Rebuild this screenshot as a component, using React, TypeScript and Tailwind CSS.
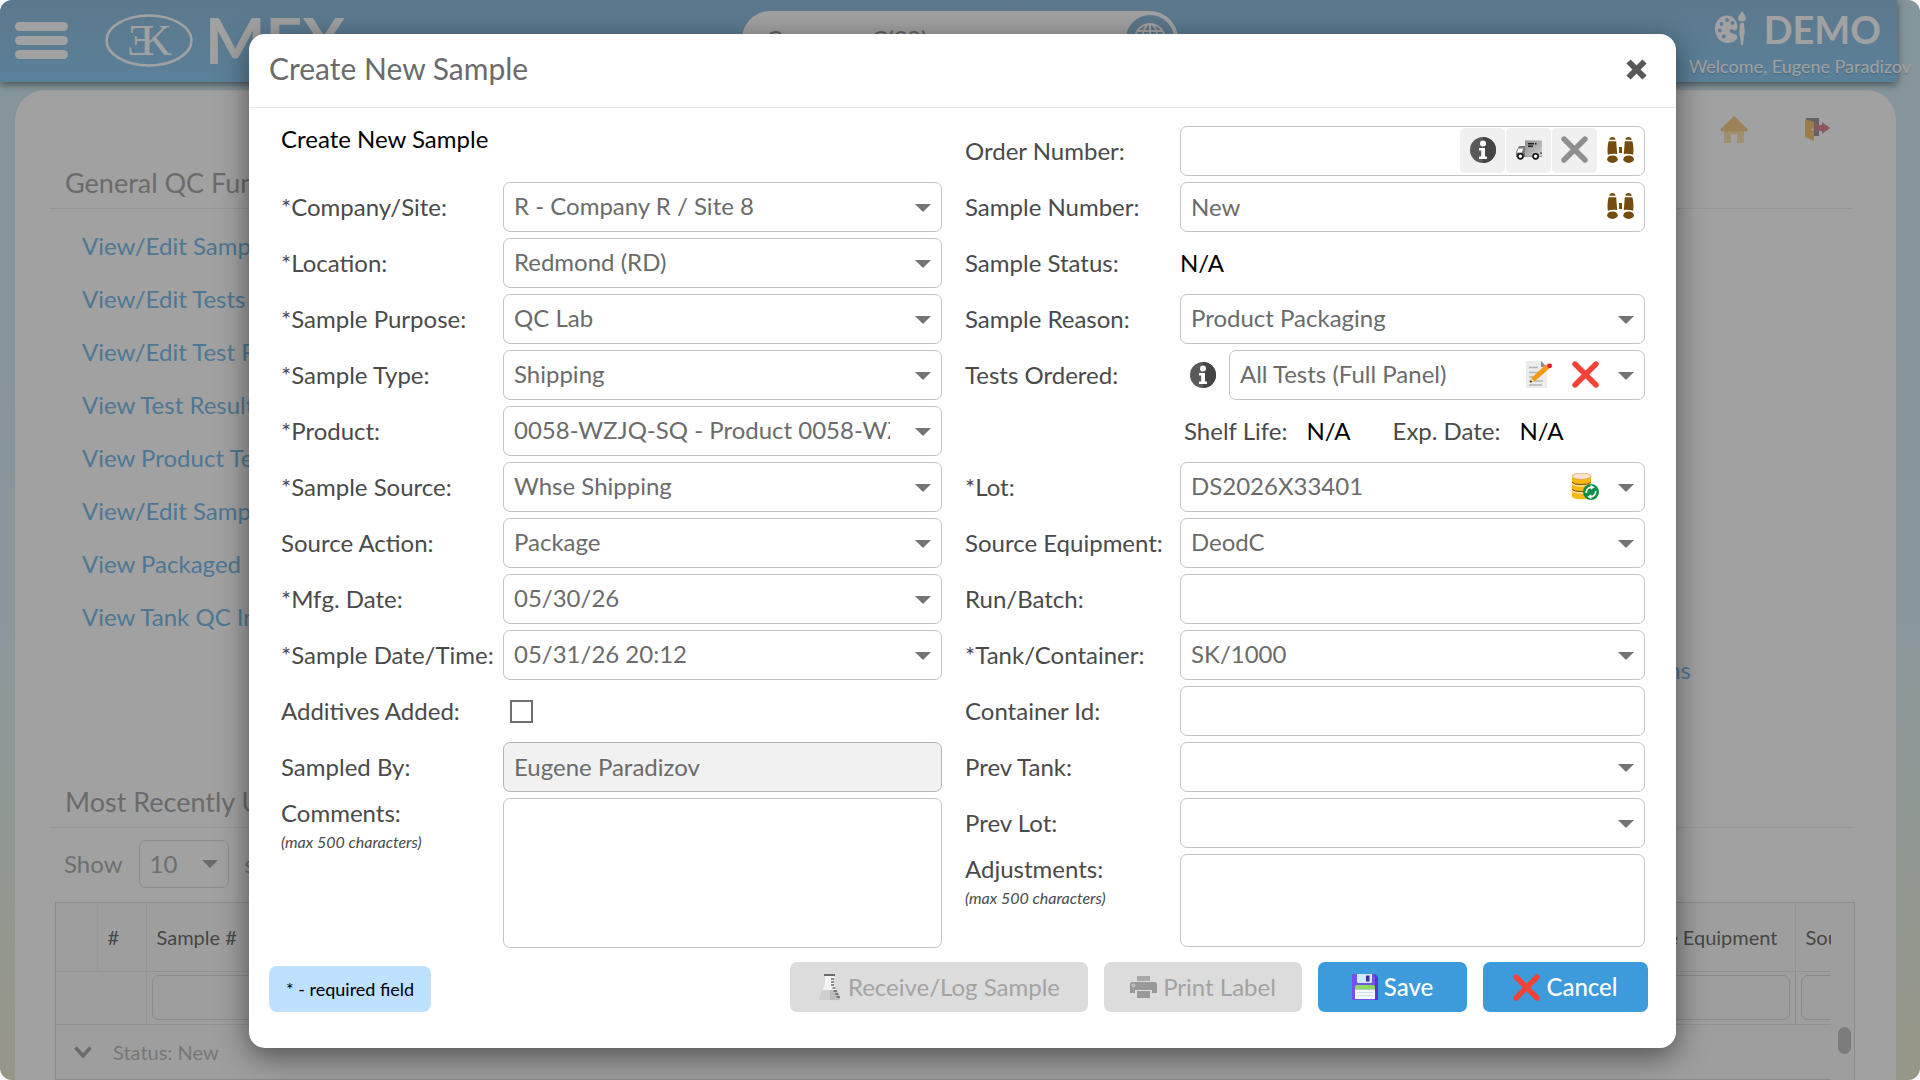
import { useId, type ReactNode } from 'react';
import clsx from 'clsx';

const QC_LINKS = [
  'View/Edit Samples',
  'View/Edit Tests',
  'View/Edit Test Results',
  'View Test Results',
  'View Product Tests',
  'View/Edit Sample Plans',
  'View Packaged Inventory',
  'View Tank QC Info',
];

const FIELD = 'w-full rounded-[7px] border text-2xl text-[#6b6b6b] outline-none';

/* ---------- icons ---------- */

function InfoIcon() {
  return (
    <svg width="26" height="26" viewBox="0 0 26 26">
      <circle cx="13" cy="13" r="13" fill="#5a5a5a" />
      <path d="M13 0a13 13 0 0 1 0 26z" fill="#454545" />
      <circle cx="13" cy="6.6" r="3" fill="#fff" />
      <path d="M9 11h6v8.6h2V22H9v-2.4h2.2v-6.2H9z" fill="#fff" />
    </svg>
  );
}

function TruckIcon() {
  return (
    <svg width="26" height="26" viewBox="0 0 26 26">
      <defs>
        <linearGradient id="truck-box" x1="0" y1="0" x2="1" y2="1">
          <stop offset="0" stopColor="#8d8d8d" />
          <stop offset="1" stopColor="#cfcfcf" />
        </linearGradient>
      </defs>
      <path d="M9 3.5h17V19H9z" fill="url(#truck-box)" />
      <path d="M12 6h6v1.5h-6zM19 6h1.5v1.5H19zM12 8.5h5V10h-5z" fill="#222" />
      <path d="M3 9h6v11H0v-5z" fill="#777" />
      <path d="M2.6 11.5h4.6l-1.4 4H.8z" fill="#fff" />
      <path d="M9 19h17v1H9z" fill="#999" />
      <circle cx="4.4" cy="19.3" r="2.6" fill="#fff" stroke="#111" strokeWidth="1.6" />
      <circle cx="19.6" cy="19.3" r="2.6" fill="#fff" stroke="#111" strokeWidth="1.6" />
      <path d="M24 15.5h2V17h-2z" fill="#555" />
    </svg>
  );
}

function CrossIcon({ color }: { color: string }) {
  return (
    <svg width="27" height="27" viewBox="0 0 27 27">
      <path d="M3 3l21 21M24 3L3 24" stroke={color} strokeWidth="5.4" strokeLinecap="round" />
    </svg>
  );
}

function BinocularsIcon() {
  return (
    <svg width="27" height="26" viewBox="0 0 27 26" fill="#754c10">
      <path d="M2.2 2.8C2.6.9 3.6 0 5.4 0s2.8.9 3.2 2.8zM18.4 2.8C18.8.9 19.8 0 21.6 0s2.8.9 3.2 2.8z" />
      <path d="M1.6 4.2h7.6l1 13c-3-.6-6-.4-9.4.6C.2 13 .6 8 1.6 4.2zM25.4 4.2h-7.6l-1 13c3-.6 6-.4 9.4.6.6-4.8.2-9.8-.8-13.6z" />
      <path d="M12 10h3v6h-3z" />
      <ellipse cx="5.4" cy="22.2" rx="5.3" ry="3.7" />
      <ellipse cx="21.6" cy="22.2" rx="5.3" ry="3.7" />
    </svg>
  );
}

function EditNoteIcon() {
  return (
    <svg width="26" height="27" viewBox="0 0 26 27">
      <path d="M0 0h15l6 6v21H0z" fill="#ececec" />
      <path d="M15 0l6 6h-6z" fill="#8e8e8e" />
      <path d="M3 6.5h9M3 11.5h10M3 16h5M3 20h14M3 24h13" stroke="#b4b4b4" strokeWidth="1.4" />
      <path d="M4 21.5l1.4-4.6L20 3.6l3.6 3.6L8.6 20.4z" fill="#f59a12" />
      <path d="M20 3.6l1.6-1.4 3.6 3.6-1.6 1.4z" fill="#c9c9c9" />
      <circle cx="23.6" cy="4.8" r="2.4" fill="#f5122b" />
      <path d="M4 21.5l1.4-4.6 3.2 3.5z" fill="#f4d6a8" />
      <path d="M4 21.5l.6-2.2 1.7 1.6z" fill="#111" />
    </svg>
  );
}

function DatabaseIcon() {
  return (
    <svg width="27" height="27" viewBox="0 0 27 27">
      <path d="M0 3v20.5C2 27.2 17 27.2 19 23.5V3z" fill="#f9b90f" />
      <path d="M0 9c2 3.4 17 3.4 19 0M0 16c2 3.4 17 3.4 19 0" stroke="#8a5a10" strokeWidth="1.2" fill="none" />
      <path d="M0 10.4c2 3.4 17 3.4 19 0M0 17.4c2 3.4 17 3.4 19 0" stroke="#fde3b0" strokeWidth="1.4" fill="none" />
      <ellipse cx="9.5" cy="3.2" rx="9.5" ry="3.2" fill="#fbe3cb" stroke="#c98f4b" strokeWidth=".6" />
      <circle cx="19" cy="19" r="8" fill="#0b8f47" />
      <path d="M14.4 20a4.8 4.8 0 0 1 5-5.600M23.6 18a4.8 4.8 0 0 1-5 5.600" stroke="#fff" strokeWidth="1.8" fill="none" />
      <path d="M18.6 11.8l4 2.4-3.8 2.6zM19.4 26.2l-4-2.4 3.8-2.600z" fill="#fff" />
    </svg>
  );
}

function FlaskIcon() {
  return (
    <svg width="24" height="27" viewBox="0 0 24 27">
      <path d="M7 1h9v9l5.6 13.4c.4 1.8-.4 2.8-2 2.8H3c-1.8 0-2.6-1-2-2.8L7 11z" fill="#f5f5f5" />
      <path d="M4 16h8v10.2H3c-1.8 0-2.6-1-2-2.8z" fill="#cfcfcf" />
      <path d="M12 16h7l3 7.4c.4 1.8-.4 2.8-2 2.8h-8z" fill="#bdbdbd" />
      <path d="M6 0h11v2H6z" fill="#6a6a6a" />
      <path d="M13 5h3M13 8h3M13 11h3M14.5 14h3M15.5 17H19M17 20h3.5M18.5 23H22" stroke="#666" strokeWidth="1.4" />
    </svg>
  );
}

function PrinterIcon() {
  return (
    <svg width="27" height="22" viewBox="0 0 27 22">
      <path d="M7 0h13v5H7z" fill="#a9a9a9" />
      <path d="M0 8.5C0 6.7.9 6 2.5 6h22c1.6 0 2.5.7 2.5 2.5V17h-5v-3H5v3H0z" fill="#999" />
      <path d="M7 15h13v7H7z" fill="#999" />
      <circle cx="3.5" cy="9.5" r="1.3" fill="#999" stroke="#ddd" strokeWidth=".9" />
    </svg>
  );
}

function FloppyIcon() {
  return (
    <svg width="26" height="26" viewBox="0 0 26 26">
      <path d="M1 0h21l4 4v21a1 1 0 0 1-1 1H1a1 1 0 0 1-1-1V1a1 1 0 0 1 1-1z" fill="#7553e8" />
      <path d="M22 0h1l3 3v23h-3V4z" fill="#5b34c9" />
      <path d="M5 0h15v7.5A1.5 1.5 0 0 1 18.5 9h-12A1.5 1.5 0 0 1 5 7.5z" fill="#cdebfb" />
      <path d="M14 1.5h3.500v6H14z" fill="#4327a8" />
      <path d="M3 13a2 2 0 0 1 2-2h16a2 2 0 0 1 2 2v2.5H3z" fill="#8fdc5a" />
      <path d="M3 15.5h20V25H3z" fill="#f3faff" />
      <path d="M5 18.5h16M5 21.8h16" stroke="#c9dbe8" strokeWidth=".9" />
    </svg>
  );
}

function LogoIcon() {
  return (
    <svg width="88" height="53" viewBox="0 0 88 53">
      <ellipse cx="44" cy="26.5" rx="42.5" ry="25" fill="none" stroke="#fff" strokeWidth="2.6" />
      <g fill="#fff" fontFamily="'Liberation Serif', serif" fontSize="44">
        <text x="22" y="41">Ǝ</text>
        <text x="35" y="41">K</text>
      </g>
    </svg>
  );
}

function GlobeIcon() {
  return (
    <svg width="32" height="32" viewBox="0 0 32 32" fill="none" stroke="#fff" strokeWidth="2">
      <circle cx="16" cy="16" r="15" />
      <ellipse cx="16" cy="16" rx="7.5" ry="15" />
      <path d="M16 1v30M1 16h30M4 8h24M4 24h24" />
    </svg>
  );
}

function PaletteIcon() {
  return (
    <svg width="31" height="34" viewBox="0 0 31 34">
      <path
        d="M12 4.500C5 4.500 0 10.500 0 18s5.200 14 12.500 14c4 0 8-1.600 9.500-4.500 1.200-2.600-.6-4.200-2.800-4.600-2.200-.5-4.600-1.600-4.400-3.400.2-1.600 2.200-1.400 4.200-.6 2 .8 3.800-.4 3.400-3.900C21.700 9 17.500 4.500 12 4.500z"
        fill="#fff"
      />
      <g fill="#93c5e8">
        <circle cx="12" cy="9" r="1.9" />
        <circle cx="6.5" cy="13" r="1.9" />
        <circle cx="17.5" cy="12" r="1.9" />
        <circle cx="4.8" cy="19.5" r="1.9" />
        <circle cx="8.8" cy="25.5" r="1.9" />
      </g>
      <path d="M27 0c2.4 3 4 5.5 4 7.5 0 1.8-1.5 3-4 3s-4-1.200-4-3C23 5.500 24.600 3 27 0zM25 12h4l.8 9L27.800 34h-1.600L24.200 21z" fill="#fff" />
    </svg>
  );
}

function HomeIcon() {
  return (
    <svg width="28" height="27" viewBox="0 0 28 27">
      <path d="M4 13h20v14h-7v-9h-6v9H4z" fill="#f9dc93" />
      <path d="M14 0l14 13.500-2 2H2l-2-2z" fill="#f3bf66" />
    </svg>
  );
}

function ExitIcon() {
  return (
    <svg width="25" height="25" viewBox="0 0 25 25">
      <path d="M1 1h13v18H1z" fill="#7d7d85" />
      <path d="M0 2l9 3v19l-9-4z" fill="#f2b04a" />
      <circle cx="7.4" cy="12.5" r="1.1" fill="#fff" />
      <path d="M11 8h6V5l8 6-8 6v-3h-6z" fill="#dc5c78" />
    </svg>
  );
}

function Caret({ className }: { className?: string }) {
  return (
    <svg width="16" height="8" viewBox="0 0 16 8" className={clsx('pointer-events-none absolute', className)}>
      <path d="M0 0h16L8 8z" fill="currentColor" />
    </svg>
  );
}

/* ---------- form pieces ---------- */

function Row({ label, htmlFor, side, children }: { label: string; htmlFor?: string; side: 'left' | 'right'; children: ReactNode }) {
  return (
    <div className="flex h-[50px] items-center">
      <label htmlFor={htmlFor} className={clsx('shrink-0 text-2xl text-[#4a4a4a]', side === 'left' ? 'w-[222px]' : 'w-[215px]')}>
        {label}
      </label>
      <div className="flex min-w-0 flex-1 items-center">{children}</div>
    </div>
  );
}

function SelectRow({ label, value, side = 'left', before, extra }: {
  label: string;
  value: string;
  side?: 'left' | 'right';
  before?: ReactNode;
  extra?: ReactNode;
}) {
  const id = useId();
  return (
    <Row label={label} htmlFor={id} side={side}>
      {before}
      <div className="relative min-w-0 flex-1">
        <select id={id} defaultValue={value} className={clsx(FIELD, 'h-[50px] appearance-none border-[#c4c4c4] bg-white pr-[51px] pb-[2px] pl-[10px]')}>
          <option value={value}>{value}</option>
        </select>
        {extra && <div className="absolute inset-y-0 right-[46px] flex items-center gap-5 pb-[2px]">{extra}</div>}
        <Caret className="top-[22px] right-[11px] text-[#737373]" />
      </div>
    </Row>
  );
}

function InputRow({ label, value = '', side = 'left', disabled, extra }: {
  label: string;
  value?: string;
  side?: 'left' | 'right';
  disabled?: boolean;
  extra?: ReactNode;
}) {
  const id = useId();
  return (
    <Row label={label} htmlFor={id} side={side}>
      <div className="relative min-w-0 flex-1">
        <input
          id={id}
          type="text"
          defaultValue={value}
          disabled={disabled}
          className={clsx(FIELD, 'h-[50px] px-[10px] pb-[2px]', disabled ? 'border-[#b5b5b5] bg-[#f1f1f1]' : 'border-[#c4c4c4] bg-white')}
        />
        {extra && <div className="absolute top-0 right-0 flex gap-px pt-[2px] pr-[2px]">{extra}</div>}
      </div>
    </Row>
  );
}

function NoteRow({ label, side, className }: { label: string; side: 'left' | 'right'; className: string }) {
  const id = useId();
  return (
    <div className="flex items-start">
      <label htmlFor={id} className={clsx('shrink-0 text-2xl leading-[30px] text-[#4a4a4a]', side === 'left' ? 'w-[222px]' : 'w-[215px]')}>
        {label}
        <span className="block text-base leading-[28px] italic">(max 500 characters)</span>
      </label>
      <textarea id={id} className={clsx(FIELD, 'min-w-0 flex-1 resize-none border-[#c4c4c4] bg-white px-[10px] py-1', className)} />
    </div>
  );
}

function ToolButton({ title, plain, children }: { title: string; plain?: boolean; children: ReactNode }) {
  return (
    <button type="button" title={title} className={clsx('flex size-[45px] items-center justify-center rounded-[5px] pb-[2px]', !plain && 'bg-[#f0f0f0]')}>
      {children}
    </button>
  );
}

/* ---------- page behind the dialog ---------- */

function PageHeader() {
  return (
    <header className="relative mr-[23px] flex h-[82px] items-start bg-linear-to-b from-[#93bedd] to-[#90cdf5] shadow-[0_2px_8px_rgba(0,0,0,0.5)]">
      <button type="button" aria-label="Menu" className="mt-[22px] ml-[15px] flex flex-col gap-[5px]">
        <span className="h-[9px] w-[53px] rounded-full bg-white" />
        <span className="h-[9px] w-[53px] rounded-full bg-white" />
        <span className="h-[9px] w-[53px] rounded-full bg-white" />
      </button>
      <div className="mt-[14px] ml-[37px] flex items-start text-white">
        <LogoIcon />
        <span className="ml-[12px] text-[64px] leading-[52px] font-bold">MEX</span>
      </div>
      <div className="absolute top-[11px] left-[742px] flex h-[56px] w-[436px] items-center justify-between rounded-full bg-white pr-1 pl-6 text-2xl text-[#999]">
        Company C(S8)
        <span className="flex size-12 items-center justify-center rounded-full bg-[#93bedd]">
          <GlobeIcon />
        </span>
      </div>
      <div className="absolute top-[11px] right-[-14px] flex flex-col items-end text-white">
        <div className="mr-[30px] flex items-start gap-[18px]">
          <PaletteIcon />
          <span className="text-[38px] leading-[37px] font-bold">DEMO</span>
        </div>
        <span className="mt-[5px] text-lg leading-[26px] text-shadow-sm">Welcome, Eugene Paradizov</span>
      </div>
    </header>
  );
}

function SampleTable() {
  return (
    <div className="relative mr-[41px] ml-[40px] h-[178px] overflow-hidden border border-b-0 border-[#dedede] bg-[#fbfbfb]">
      <table className="w-[calc(100%-23px)] table-fixed border-collapse text-left text-xl text-[#6f6f6f]">
        <colgroup>
          <col className="w-[41px]" />
          <col className="w-[49px]" />
          <col className="w-[200px]" />
          <col />
          <col className="w-[195px]" />
          <col className="w-[36px]" />
        </colgroup>
        <thead>
          <tr className="h-[68px] border-b border-[#e8e8e8]">
            <th className="border-r border-[#efefef]" />
            <th className="border-r border-[#ebebeb] pl-[10px] font-normal">#</th>
            <th className="border-r border-[#ebebeb] pl-[10px] font-normal">Sample #</th>
            <th />
            <th className="border-r border-[#ebebeb] pr-[17px] text-right font-normal">Source Equipment</th>
            <th className="overflow-hidden pl-[10px] font-normal whitespace-nowrap">Source</th>
          </tr>
        </thead>
        <tbody>
          <tr className="h-[53px] border-b border-[#e4e4e4]">
            <td colSpan={2} className="border-r border-[#ebebeb]" />
            <td className="pl-[5px]">
              <input aria-label="Filter sample number" className="h-[45px] w-full rounded-[7px] border border-[#ddd]" />
            </td>
            <td />
            <td className="border-r border-[#dedede] pr-[5px]">
              <input aria-label="Filter equipment" className="h-[45px] w-full rounded-[7px] border border-[#dadada]" />
            </td>
            <td className="overflow-hidden pl-[5px]">
              <input aria-label="Filter source" className="h-[45px] w-[120px] rounded-[7px] border border-[#dadada]" />
            </td>
          </tr>
          <tr className="h-[55px] border-b border-[#ddd]">
            <td colSpan={6} className="pl-[18px] text-[#bdbdbd]">
              <div className="flex items-center gap-[21px]">
                <svg width="18" height="12" viewBox="0 0 18 12" fill="none" stroke="#aaa" strokeWidth="3.5">
                  <path d="M1.5 1.5L9 10l7.5-8.5" />
                </svg>
                Status: New
              </div>
            </td>
          </tr>
        </tbody>
      </table>
      <div className="absolute top-[124px] right-[3px] h-[27px] w-[13px] rounded-full bg-[#c4c4c4]" />
    </div>
  );
}

function QcPage() {
  return (
    <div className="flex h-full flex-col bg-linear-to-b from-[#d3ecf6] from-20% via-[#dcf0f4] via-60% to-[#eeeed6]">
      <PageHeader />
      <main className="mt-2 mr-[24px] ml-[15px] flex-1 overflow-hidden rounded-t-[30px] bg-white">
        <div className="mr-[66px] flex h-[64px] items-center justify-end gap-[57px] pt-[15px] opacity-75">
          <a href="#home" title="Home"><HomeIcon /></a>
          <a href="#exit" title="Exit"><ExitIcon /></a>
        </div>
        <section className="h-[620px] pr-[43px] pl-[35px]">
          <h2 className="h-[55px] border-b border-[#eee] pt-[11px] pl-[15px] text-[27px] leading-[36px] text-[#aaa]">General QC Functions</h2>
          <div className="flex h-[487px] justify-between pt-[11px] pr-[162px] pl-[32px] text-2xl">
            <ul>
              {QC_LINKS.map((link, i) => (
                <li key={i} className="h-[53px] leading-[52px] text-[#7cbde9]">
                  <a href="#qc">{link}</a>
                </li>
              ))}
            </ul>
            <a href="#qc" className="self-end leading-[52px] text-[#7cbde9]">Specifications</a>
          </div>
        </section>
        <section>
          <h2 className="mr-[43px] ml-[35px] h-[54px] border-b border-[#eee] pt-[10px] pl-[15px] text-[27px] leading-[36px] text-[#aaa]">
            Most Recently Updated
          </h2>
          <div className="flex h-[74px] items-center gap-4 pb-[3px] pl-[49px] text-2xl text-[#b0b0b0]">
            <label htmlFor="page-size">Show</label>
            <div className="relative w-[90px]">
              <select id="page-size" className="h-[48px] w-full appearance-none rounded-[7px] border border-[#ddd] pl-[10px]">
                <option>10</option>
              </select>
              <Caret className="top-[20px] right-[11px] text-[#aaa]" />
            </div>
            samples
          </div>
          <SampleTable />
        </section>
      </main>
    </div>
  );
}

/* ---------- dialog ---------- */

function CreateSampleDialog() {
  const additivesId = useId();
  return (
    <div role="dialog" aria-label="Create New Sample" className="w-full rounded-2xl bg-white shadow-[0_8px_30px_rgba(0,0,0,0.5)]">
      <div className="flex h-[74px] items-center justify-between border-b border-[#e6e6e6] pr-[29px] pb-[3px] pl-5">
        <h1 className="pb-[3px] text-3xl text-[#6b6b6b]">Create New Sample</h1>
        <button type="button" aria-label="Close">
          <svg width="21" height="21" viewBox="0 0 21 21">
            <path d="M2.5 2.5l16 16M18.5 2.5l-16 16" stroke="#595959" strokeWidth="6" />
          </svg>
        </button>
      </div>

      <form className="grid grid-cols-[661fr_680fr] gap-x-[23px] pt-[18px] pr-[31px] pl-8">
        <div className="flex flex-col gap-[6px]">
          <h2 className="h-[50px] text-2xl leading-[26px] text-black">Create New Sample</h2>
          <SelectRow label="*Company/Site:" value="R - Company R / Site 8" />
          <SelectRow label="*Location:" value="Redmond (RD)" />
          <SelectRow label="*Sample Purpose:" value="QC Lab" />
          <SelectRow label="*Sample Type:" value="Shipping" />
          <SelectRow label="*Product:" value="0058-WZJQ-SQ - Product 0058-WZJQ-SQ" />
          <SelectRow label="*Sample Source:" value="Whse Shipping" />
          <SelectRow label="Source Action:" value="Package" />
          <SelectRow label="*Mfg. Date:" value="05/30/26" />
          <SelectRow label="*Sample Date/Time:" value="05/31/26 20:12" />
          <Row label="Additives Added:" htmlFor={additivesId} side="left">
            <input id={additivesId} type="checkbox" className="ml-[7px] size-[23px] appearance-none border-2 border-[#707070] bg-white" />
          </Row>
          <InputRow label="Sampled By:" value="Eugene Paradizov" disabled />
          <NoteRow label="Comments:" side="left" className="h-[150px]" />
        </div>

        <div className="flex flex-col gap-[6px]">
          <InputRow
            label="Order Number:"
            side="right"
            extra={
              <>
                <ToolButton title="Order info"><InfoIcon /></ToolButton>
                <ToolButton title="Shipment"><TruckIcon /></ToolButton>
                <ToolButton title="Clear order"><CrossIcon color="#8f8f8f" /></ToolButton>
                <ToolButton title="Find order" plain><BinocularsIcon /></ToolButton>
              </>
            }
          />
          <InputRow label="Sample Number:" value="New" side="right" extra={<ToolButton title="Find sample" plain><BinocularsIcon /></ToolButton>} />
          <Row label="Sample Status:" side="right">
            <span className="text-2xl text-black">N/A</span>
          </Row>
          <SelectRow label="Sample Reason:" value="Product Packaging" side="right" />
          <SelectRow
            label="Tests Ordered:"
            value="All Tests (Full Panel)"
            side="right"
            before={<button type="button" title="Test info" className="mr-[13px] ml-[10px]"><InfoIcon /></button>}
            extra={
              <>
                <button type="button" title="Edit tests"><EditNoteIcon /></button>
                <button type="button" title="Clear tests"><CrossIcon color="#f44336" /></button>
              </>
            }
          />
          <div className="flex h-[50px] items-center pl-[219px] text-2xl text-[#4a4a4a]">
            Shelf Life:
            <span className="ml-[19px] text-black">N/A</span>
            <span className="ml-[42px]">Exp. Date:</span>
            <span className="ml-[19px] text-black">N/A</span>
          </div>
          <SelectRow label="*Lot:" value="DS2026X33401" side="right" extra={<button type="button" title="Refresh lots"><DatabaseIcon /></button>} />
          <SelectRow label="Source Equipment:" value="DeodC" side="right" />
          <InputRow label="Run/Batch:" side="right" />
          <SelectRow label="*Tank/Container:" value="SK/1000" side="right" />
          <InputRow label="Container Id:" side="right" />
          <SelectRow label="Prev Tank:" value="" side="right" />
          <SelectRow label="Prev Lot:" value="" side="right" />
          <NoteRow label="Adjustments:" side="right" className="h-[93px]" />
        </div>
      </form>

      <div className="flex items-end pt-[14px] pr-7 pb-9 pl-5">
        <span className="rounded-lg bg-[#bde1ff] px-[17px] text-lg leading-[46px] text-black">* - required field</span>
        <div className="ml-auto flex gap-4 text-2xl">
          <button type="button" disabled className="flex h-[50px] w-[298px] items-center justify-center gap-1.5 rounded-[7px] bg-[#dcdcdc] text-[#a3a3a3]">
            <FlaskIcon />
            Receive/Log Sample
          </button>
          <button type="button" disabled className="flex h-[50px] w-[198px] items-center justify-center gap-1.5 rounded-[7px] bg-[#dcdcdc] text-[#a3a3a3]">
            <PrinterIcon />
            Print Label
          </button>
          <button type="button" className="flex h-[50px] w-[149px] items-center justify-center gap-1.5 rounded-[7px] bg-[#3d9adb] font-medium text-white">
            <FloppyIcon />
            Save
          </button>
          <button type="button" className="flex h-[50px] w-[165px] items-center justify-center gap-1.5 rounded-[7px] bg-[#3d9adb] font-medium text-white">
            <CrossIcon color="#f44336" />
            Cancel
          </button>
        </div>
      </div>
    </div>
  );
}

export default function App() {
  return (
    <div className="relative h-screen overflow-hidden rounded-[12px] font-['Lato',sans-serif]">
      <QcPage />
      <div className="absolute inset-0 bg-black/37 pt-[34px] pr-[244px] pl-[249px]">
        <CreateSampleDialog />
      </div>
    </div>
  );
}
